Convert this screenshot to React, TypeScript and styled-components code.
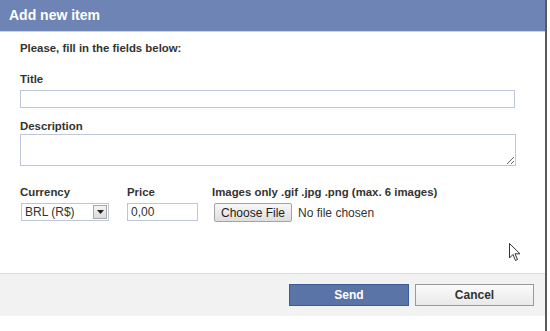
import React from 'react';
import styled, { createGlobalStyle } from 'styled-components';

const GlobalStyle = createGlobalStyle`
  html, body {
    margin: 0;
    padding: 0;
    background: #ffffff;
  }
  body {
    font-family: "Liberation Sans", Arial, sans-serif;
    font-size: 12px;
    color: #333333;
  }
`;

const Page = styled.div`
  position: relative;
  width: 550px;
  height: 331px;
  overflow: hidden;
  background: #ffffff;
`;

const Dialog = styled.div`
  width: 545px;
  height: 331px;
  border-right: 2px solid #5a5a5a;
  display: flex;
  flex-direction: column;
  background: #ffffff;
`;

const Header = styled.div`
  height: 31px;
  background: #6d84b4;
  border-bottom: 1px solid #c9d3e8;
  color: #ffffff;
  font-weight: bold;
  font-size: 14px;
  line-height: 31px;
  padding-left: 9px;
`;

const Body = styled.div`
  flex: 1;
  padding: 9px 30px 0 20px;
  display: flex;
  flex-direction: column;
`;

const Intro = styled.div`
  font-weight: bold;
  font-size: 11.4px;
  line-height: 14px;
  color: #333333;
`;

const Label = styled.label<{ $top?: number; $bottom?: number }>`
  display: block;
  font-weight: bold;
  font-size: 11.4px;
  line-height: 14px;
  color: #333333;
  margin-top: ${(p) => p.$top ?? 0}px;
  margin-bottom: ${(p) => p.$bottom ?? 4}px;
`;

const TextInput = styled.input`
  box-sizing: border-box;
  width: 495px;
  height: 18px;
  border: 1px solid #bdc7d8;
  padding: 1px 3px;
  font-family: "Liberation Sans", Arial, sans-serif;
  font-size: 12px;
  color: #333333;
  outline: none;
`;

const TextArea = styled.textarea`
  box-sizing: border-box;
  width: 496px;
  height: 32px;
  border: 1px solid #bdc7d8;
  padding: 2px 3px;
  font-family: "Liberation Sans", Arial, sans-serif;
  font-size: 12px;
  margin: 0;
  display: block;
  outline: none;
`;

const FieldRow = styled.div`
  display: flex;
  margin-top: 19px;
`;

const Field = styled.div<{ $width: number }>`
  width: ${(p) => p.$width}px;
  flex-shrink: 0;
`;

const SelectBox = styled.div`
  box-sizing: border-box;
  width: 88px;
  height: 18px;
  border: 1px solid #bdc7d8;
  display: flex;
  align-items: center;
  margin-left: 1px;
`;

const SelectText = styled.select`
  appearance: none;
  -webkit-appearance: none;
  border: none;
  background: transparent;
  flex: 1;
  height: 16px;
  padding: 0 3px;
  font-family: "Liberation Sans", Arial, sans-serif;
  font-size: 12px;
  color: #333333;
  outline: none;
`;

const ArrowBox = styled.span`
  box-sizing: border-box;
  width: 14px;
  height: 14px;
  margin-right: 1px;
  border: 1px solid #a8a8a8;
  background: linear-gradient(#f4f4f4, #dadada);
  display: flex;
  align-items: center;
  justify-content: center;
`;

const PriceInput = styled(TextInput)`
  width: 71px;
  margin-left: 0;
`;

const FileInput = styled.input`
  font-family: "Liberation Sans", Arial, sans-serif;
  font-size: 12px;
  color: #333333;
  margin-left: 2px;
  margin-top: 0;

  &::file-selector-button {
    font-family: "Liberation Sans", Arial, sans-serif;
    font-size: 12px;
    color: #222222;
    height: 19px;
    padding: 0 6px;
    margin-right: 6px;
    border: 1px solid #a3a3a3;
    border-radius: 2px;
    background: linear-gradient(#f7f7f7, #dedede);
  }
`;

const Footer = styled.div`
  height: 42px;
  background: #f2f2f2;
  border-top: 1px solid #dddddd;
  display: flex;
  justify-content: flex-end;
  align-items: center;
  gap: 6px;
  padding-right: 11px;
  margin-bottom: 15px;
`;

const Button = styled.button<{ $primary?: boolean }>`
  box-sizing: border-box;
  width: ${(p) => (p.$primary ? 120 : 119)}px;
  height: 22px;
  font-family: "Liberation Sans", Arial, sans-serif;
  font-size: 12px;
  font-weight: bold;
  border: 1px solid ${(p) => (p.$primary ? '#3b5a96' : '#9a9a9a')};
  color: ${(p) => (p.$primary ? '#ffffff' : '#333333')};
  background: ${(p) =>
    p.$primary ? '#5b74a8' : 'linear-gradient(#fbfbfb, #e9e9e9)'};
  padding: 0;
  cursor: pointer;
`;

const Cursor = styled.svg`
  position: absolute;
  left: 509px;
  top: 243px;
`;

const currencies = ['BRL (R$)', 'USD ($)', 'EUR (€)'];

export default function App() {
  return (
    <Page>
      <GlobalStyle />
      <Dialog>
        <Header>Add new item</Header>
        <Body>
          <Intro>Please, fill in the fields below:</Intro>
          <Label $top={17}>Title</Label>
          <TextInput type="text" />
          <Label $top={11} $bottom={1}>
            Description
          </Label>
          <TextArea />
          <FieldRow>
            <Field $width={107}>
              <Label>Currency</Label>
              <SelectBox>
                <SelectText defaultValue={currencies[0]}>
                  {currencies.map((c) => (
                    <option key={c}>{c}</option>
                  ))}
                </SelectText>
                <ArrowBox>
                  <svg width="7" height="4" viewBox="0 0 7 4">
                    <path d="M0 0 L7 0 L3.5 4 Z" fill="#222" />
                  </svg>
                </ArrowBox>
              </SelectBox>
            </Field>
            <Field $width={85}>
              <Label>Price</Label>
              <PriceInput type="text" defaultValue="0,00" />
            </Field>
            <Field $width={300}>
              <Label>Images only .gif .jpg .png (max. 6 images)</Label>
              <FileInput type="file" />
            </Field>
          </FieldRow>
        </Body>
        <Footer>
          <Button $primary>Send</Button>
          <Button>Cancel</Button>
        </Footer>
      </Dialog>
      <Cursor width="12" height="19" viewBox="0 0 12 19">
        <path
          d="M0.5 0.5 L0.5 15 L4 11.5 L6.5 17.5 L8.5 16.5 L6 10.8 L11 10.8 Z"
          fill="#ffffff"
          stroke="#333333"
          strokeWidth="1"
          strokeLinejoin="round"
        />
      </Cursor>
    </Page>
  );
}
